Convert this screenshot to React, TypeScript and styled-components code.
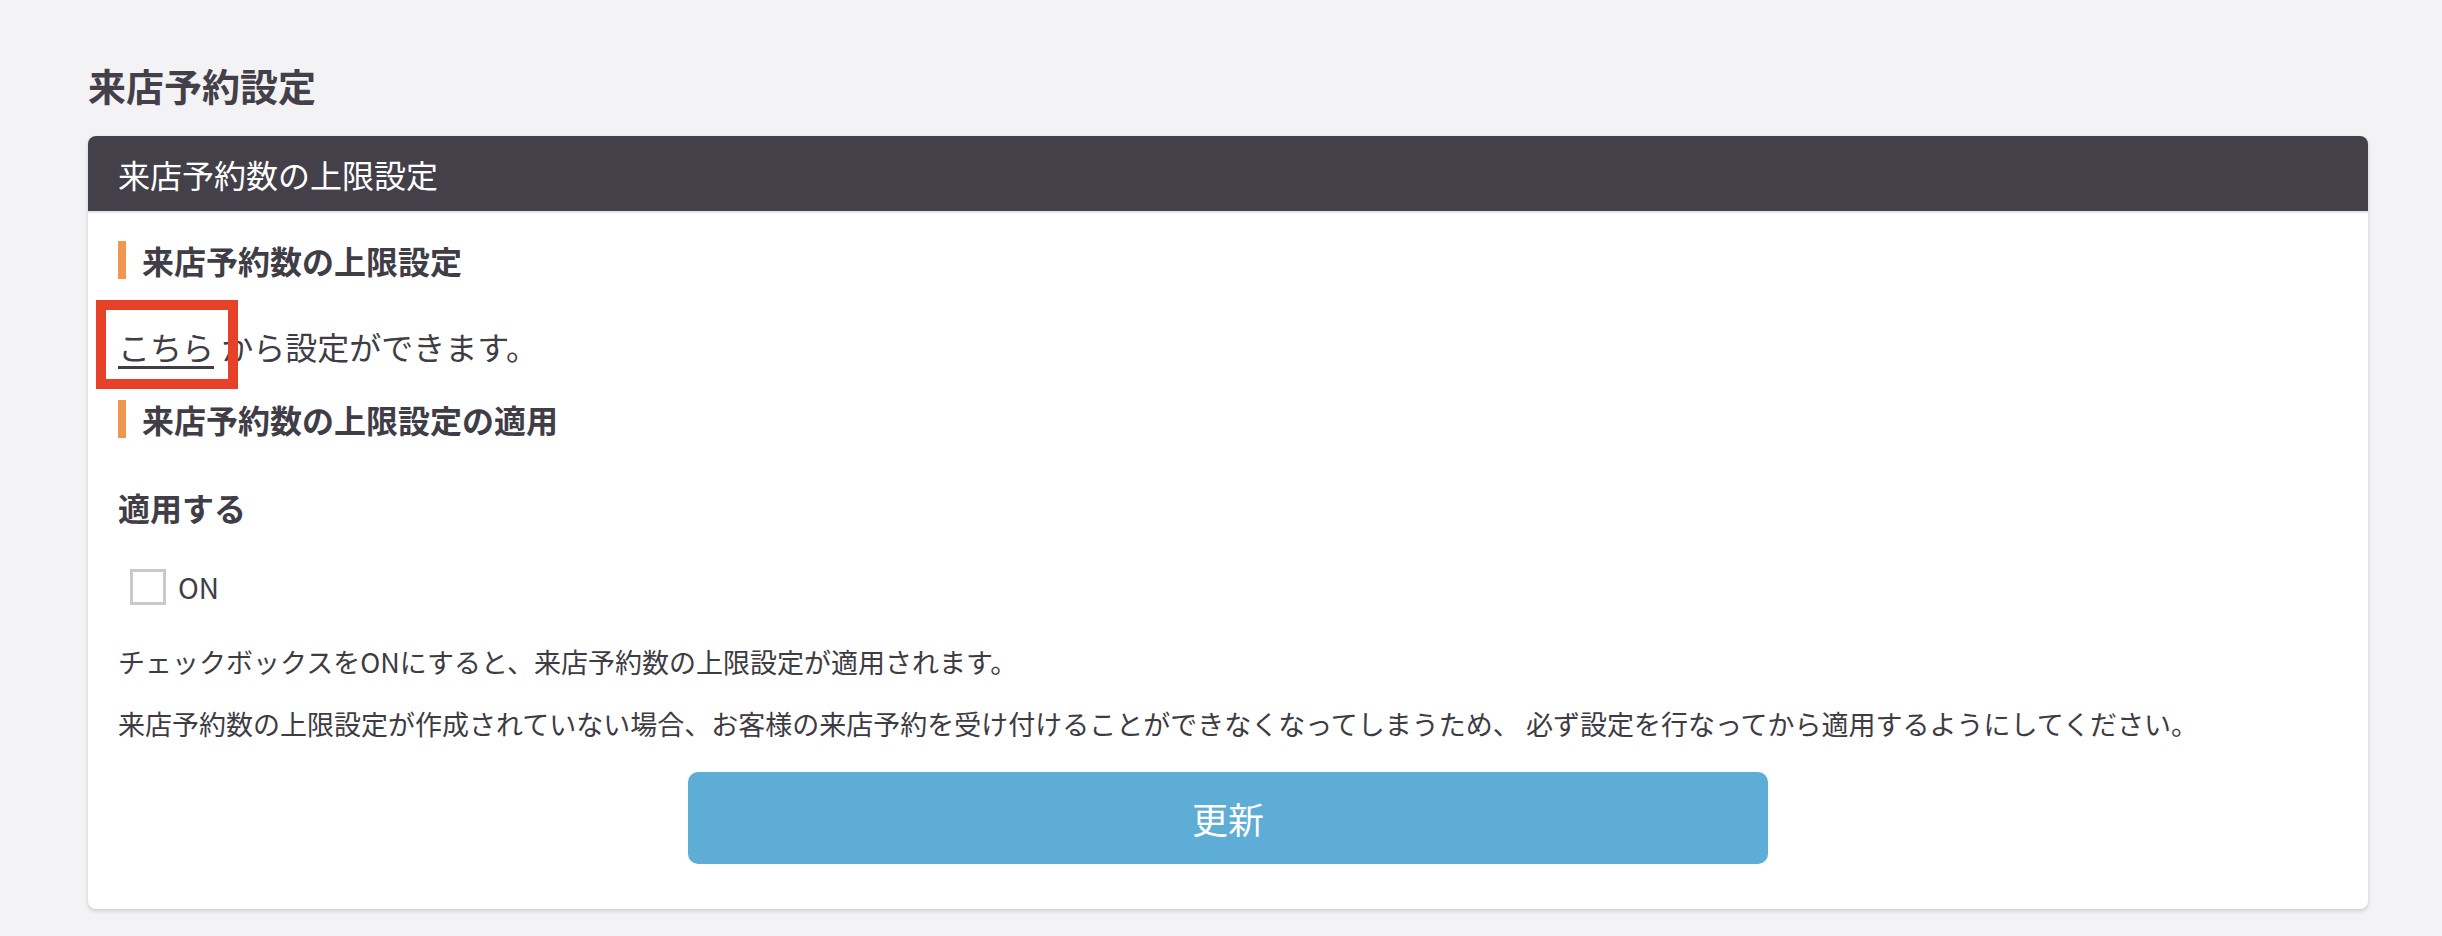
import React from 'react'
import styled, { createGlobalStyle } from 'styled-components'

const GlobalStyle = createGlobalStyle`
    html, body {
        margin: 0;
        padding: 0;
        background: #f3f3f5;
    }
    body {
        font-family: 'Noto Sans CJK JP', 'Noto Sans', sans-serif;
        color: #403d46;
    }
`

const Page = styled.div`
    padding: 57px 74px 27px 88px;
`

const PageTitle = styled.h1`
    margin: 0 0 23px;
    font-size: 38px;
    line-height: 56px;
    font-weight: 700;
    color: #434049;
`

const Card = styled.section`
    background: #ffffff;
    border-radius: 8px;
    box-shadow: 0 2px 4px rgba(0, 0, 0, 0.16);
    overflow: hidden;
`

const CardHeader = styled.header`
    display: flex;
    align-items: center;
    height: 75px;
    padding: 0 30px;
    background: #434049;
    color: #ffffff;
    font-size: 32px;
    border-bottom: 2px solid #e6e6ea;
`

const CardBody = styled.div`
    padding: 28px 30px 45px;
`

type GapProps = { $top?: number }

const SectionHeading = styled.h2<GapProps>`
    margin: ${(p) => p.$top || 0}px 0 0;
    height: 38px;
    line-height: 38px;
    padding-left: 16px;
    border-left: 8px solid #f0964f;
    font-size: 32px;
    font-weight: 700;
    color: #403d46;
`

const LinkLine = styled.p`
    position: relative;
    margin: 43px 0 0;
    font-size: 32px;
    line-height: 48px;
`

const TextLink = styled.a`
    color: #403d46;
    text-decoration: underline;
    text-decoration-thickness: 3px;
    text-underline-offset: 6px;
    cursor: pointer;
`

// 注記用の赤枠（スクリーンショット上のマーキング）
const Marker = styled.span`
    position: absolute;
    left: -22px;
    top: -22px;
    width: 142px;
    height: 89px;
    box-sizing: border-box;
    border: 10px solid #e8412a;
    pointer-events: none;
`

const FieldLabel = styled.div`
    margin-top: 45px;
    font-size: 32px;
    line-height: 48px;
    font-weight: 700;
`

const CheckRow = styled.label`
    display: flex;
    align-items: center;
    gap: 12px;
    margin-top: 32px;
    padding-left: 12px;
    height: 48px;
    font-size: 28px;
    cursor: pointer;
`

const CheckBox = styled.span`
    box-sizing: border-box;
    width: 36px;
    height: 36px;
    border: 3px solid #c9c9c9;
    background: #ffffff;
`

const Note = styled.p<GapProps>`
    margin: ${(p) => p.$top || 0}px 0 0;
    font-size: 27px;
    line-height: 40px;
    color: #3e3b42;
`

const ButtonRow = styled.div`
    display: flex;
    justify-content: center;
    margin-top: 28px;
`

const SubmitButton = styled.button`
    width: 1080px;
    height: 92px;
    border: none;
    border-radius: 10px;
    background: #5eadd6;
    color: #ffffff;
    font-family: inherit;
    font-size: 36px;
    cursor: pointer;
`

export default function App() {
    return (
        <Page>
            <GlobalStyle />
            <PageTitle>来店予約設定</PageTitle>
            <Card>
                <CardHeader>来店予約数の上限設定</CardHeader>
                <CardBody>
                    <SectionHeading>来店予約数の上限設定</SectionHeading>
                    <LinkLine>
                        <TextLink>こちら</TextLink> から設定ができます。
                        <Marker />
                    </LinkLine>
                    <SectionHeading $top={30}>
                        来店予約数の上限設定の適用
                    </SectionHeading>
                    <FieldLabel>適用する</FieldLabel>
                    <CheckRow>
                        <CheckBox />
                        ON
                    </CheckRow>
                    <Note $top={31}>
                        チェックボックスをONにすると、来店予約数の上限設定が適用されます。
                    </Note>
                    <Note $top={22}>
                        来店予約数の上限設定が作成されていない場合、お客様の来店予約を受け付けることができなくなってしまうため、
                        必ず設定を行なってから適用するようにしてください。
                    </Note>
                    <ButtonRow>
                        <SubmitButton>更新</SubmitButton>
                    </ButtonRow>
                </CardBody>
            </Card>
        </Page>
    )
}
